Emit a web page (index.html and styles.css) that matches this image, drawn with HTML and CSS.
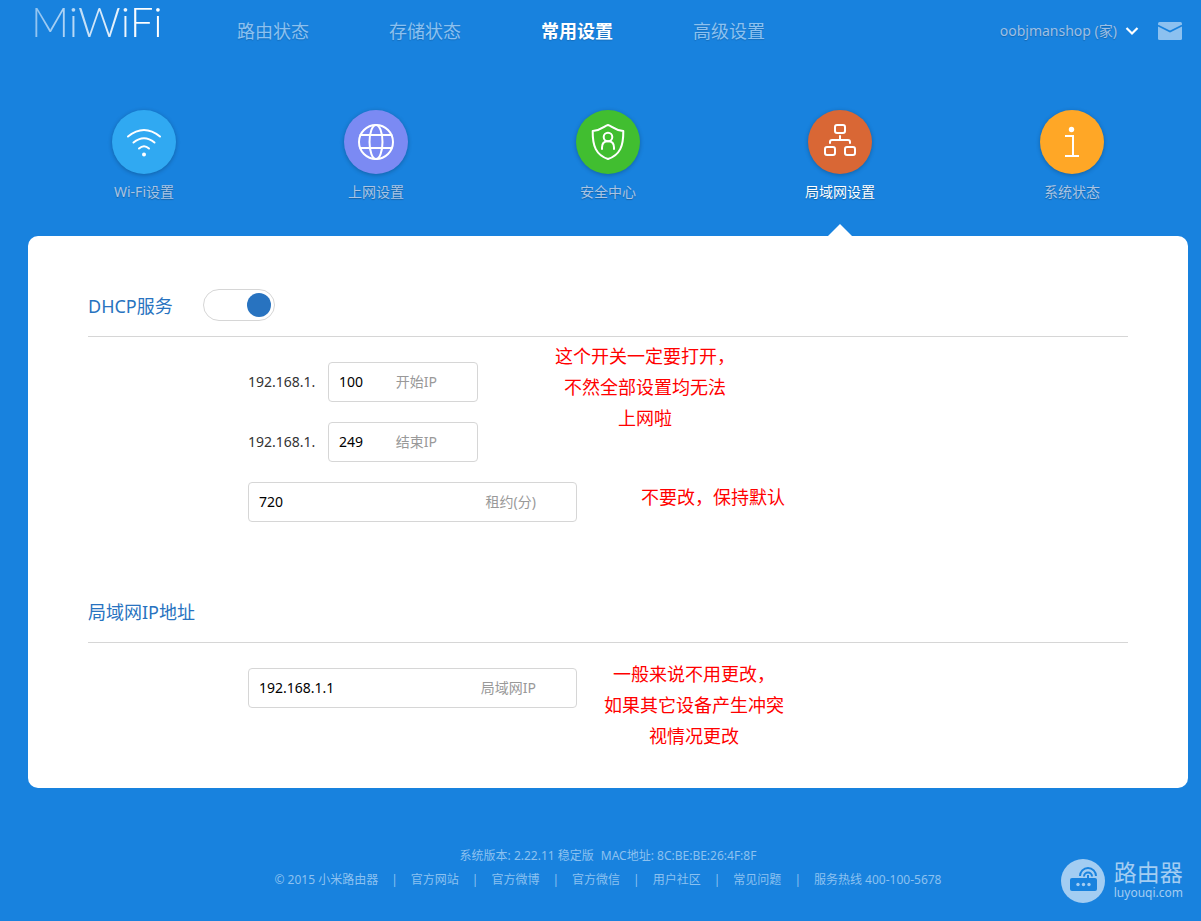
FILE: index.html
```html
<!DOCTYPE html>
<html lang="zh-CN">
<head>
<meta charset="utf-8">
<meta name="viewport" content="width=device-width, initial-scale=1">
<title>MiWiFi 局域网设置</title>
<link rel="stylesheet" href="styles.css">
</head>
<body>
<header class="topbar">
  <a class="brand" href="#">MiWiFi</a>
  <nav class="main-nav">
    <a href="#">路由状态</a>
    <a href="#">存储状态</a>
    <a class="active" href="#">常用设置</a>
    <a href="#">高级设置</a>
  </nav>
  <div class="account">
    <button class="user" type="button">oobjmanshop (家)
      <svg width="14" height="10" viewBox="0 0 14 10" fill="none" stroke="#fff" stroke-width="2.2"><path d="M1.5 2 7 7.500l5.500-5.500"/></svg>
    </button>
    <button class="mail" type="button" aria-label="消息">
      <svg width="24" height="18" viewBox="0 0 24 18"><rect width="24" height="18" rx="1.500" fill="#8cc1f0"/><path d="M0 3.500 12 9.500l12-6" fill="none" stroke="#1882de" stroke-width="1.600"/></svg>
    </button>
  </div>
</header>

<main class="page">
  <nav class="sub-nav">
    <a href="#">
      <span class="disc wifi"><svg viewBox="0 0 64 64"><path d="M16 26.500Q32 13.500 48 26.500M21.500 32.500Q32 24 42.500 32.500M27 38.500Q32 34 37 38.500"/><circle class="dot" cx="32" cy="44.500" r="2"/></svg></span>
      Wi-Fi设置
    </a>
    <a href="#">
      <span class="disc net"><svg viewBox="0 0 64 64"><circle cx="32" cy="32" r="17"/><ellipse cx="32" cy="32" rx="6.500" ry="17"/><path d="M16.500 25h31M16.500 38h31"/></svg></span>
      上网设置
    </a>
    <a href="#">
      <span class="disc safe"><svg viewBox="0 0 64 64"><path d="M32 15c-4 1-5.500 5-15.300 6C16.500 36 20 45 32 49c12-4 15.500-13 15.300-28C37.500 20 36 16 32 15z"/><circle cx="32" cy="27" r="4.300"/><path d="M26 39v-1.500c0-3.500 2-6.200 6-6.200s6 2.700 6 6.200v1.500"/></svg></span>
      安全中心
    </a>
    <a class="active" href="#">
      <span class="disc lan"><svg viewBox="0 0 64 64"><rect x="27" y="15" width="10" height="8" rx="2"/><rect x="17" y="37" width="10" height="8" rx="2"/><rect x="37" y="37" width="10" height="8" rx="2"/><path d="M32 26v4M22 33v-1q0-2 2-2h16q2 0 2 2v1"/></svg></span>
      局域网设置
    </a>
    <a href="#">
      <span class="disc info"><svg viewBox="0 0 64 64"><circle class="dot" cx="31.500" cy="19.500" r="2.700"/><path d="M25 26h8v20M25 46h14"/></svg></span>
      系统状态
    </a>
  </nav>

  <form class="panel">
    <section>
      <div class="section-head">
        <h2 id="dhcp">DHCP服务</h2>
        <input class="switch" type="checkbox" role="switch" aria-labelledby="dhcp" checked>
      </div>
      <div class="section-body dhcp-body">
        <div class="line">
          <div class="fields">
            <div class="ip-row">
              <span class="prefix">192.168.1.</span>
              <div class="field"><input id="start" type="text" value="100"><label for="start">开始IP</label></div>
            </div>
            <div class="ip-row">
              <span class="prefix">192.168.1.</span>
              <div class="field"><input id="end" type="text" value="249"><label for="end">结束IP</label></div>
            </div>
          </div>
          <p class="note note-switch">这个开关一定要打开，<br>不然全部设置均无法<br>上网啦</p>
        </div>
        <div class="line lease">
          <div class="field wide"><input id="lease" type="text" value="720"><label for="lease">租约(分)</label></div>
          <p class="note note-lease">不要改，保持默认</p>
        </div>
      </div>
    </section>
    <section>
      <div class="section-head"><h2>局域网IP地址</h2></div>
      <div class="section-body lan-body">
        <div class="line">
          <div class="field wide lan-field"><input id="lanip" type="text" value="192.168.1.1"><label for="lanip">局域网IP</label></div>
          <p class="note note-lan">一般来说不用更改，<br>如果其它设备产生冲突<br>视情况更改</p>
        </div>
      </div>
    </section>
  </form>
</main>

<footer class="footer">
  <p class="version"><span>系统版本: 2.22.11 稳定版</span><span>MAC地址: 8C:BE:BE:26:4F:8F</span></p>
  <div class="links">
    <span>© 2015 小米路由器</span><span>|</span>
    <a href="#">官方网站</a><span>|</span>
    <a href="#">官方微博</a><span>|</span>
    <a href="#">官方微信</a><span>|</span>
    <a href="#">用户社区</a><span>|</span>
    <a href="#">常见问题</a><span>|</span>
    <span>服务热线 400-100-5678</span>
  </div>
  <div class="watermark">
    <svg width="44" height="44" viewBox="0 0 44 44"><circle cx="22" cy="22" r="22" fill="#a3cdf2"/><rect x="9" y="19" width="27" height="13" rx="2" fill="#1882de"/><g fill="#a3cdf2"><circle cx="17" cy="25.500" r="1.700"/><circle cx="22.500" cy="25.500" r="1.700"/><circle cx="28" cy="25.500" r="1.700"/></g><path d="M19 17a8 8 0 0 1 16 0M23 17.500a4 4 0 0 1 8 0" fill="none" stroke="#1882de" stroke-width="2"/><path d="M27 16v4" stroke="#1882de" stroke-width="2"/></svg>
    <div class="mark-text"><span class="mark-name">路由器</span><span class="mark-url">luyouqi.com</span></div>
  </div>
</footer>
</body>
</html>
```

FILE: styles.css
```css
* { box-sizing: border-box; }

body {
  margin: 0;
  min-height: 100vh;
  background: #1882de;
  color: #333;
  font: 14px/20px "Noto Sans", "Noto Sans CJK SC", sans-serif;
}

a { color: inherit; text-decoration: none; }
h2, p { margin: 0; }
button {
  padding: 0;
  border: 0;
  background: none;
  color: inherit;
  font: inherit;
  cursor: pointer;
}

.topbar {
  display: flex;
  align-items: center;
  height: 62px;
  padding: 0 19px 0 31px;
}

.brand {
  width: 206px;
  padding-bottom: 20px;
  background: linear-gradient(90deg, #8cc1f0, #fff 110px);
  background-clip: text;
  -webkit-background-clip: text;
  color: transparent;
  font: 300 42px/42px Lato, sans-serif;
}

.main-nav {
  display: flex;
  gap: 80px;
  color: #8cc1f0;
  font-size: 18px;
  line-height: 26px;
  white-space: nowrap;
}
.main-nav a { text-shadow: 0 1px 1px rgba(0, 0, 0, .15); }
.main-nav .active { color: #fff; font-weight: 700; }

.account {
  display: flex;
  align-items: center;
  gap: 19px;
  margin-left: auto;
  color: #9fbfe3;
}
.user {
  display: flex;
  align-items: center;
  gap: 8px;
  white-space: nowrap;
  text-shadow: 0 1px 1px rgba(0, 0, 0, .2);
}
.mail { display: flex; }

.page { padding: 48px 13px 0 28px; }

.sub-nav {
  display: grid;
  grid-template-columns: repeat(5, 1fr);
  height: 126px;
  color: #a9c4e4;
}
.sub-nav a {
  position: relative;
  display: flex;
  flex-direction: column;
  align-items: center;
  gap: 8px;
  text-shadow: 0 1px 1px rgba(0, 0, 0, .25);
}
.sub-nav .active { color: #fff; }
.sub-nav .active::after {
  content: "";
  position: absolute;
  bottom: 0;
  border: solid transparent;
  border-width: 0 12px 12px;
  border-bottom-color: #fff;
}

.disc {
  width: 64px;
  height: 64px;
  border-radius: 50%;
  box-shadow: 0 1px 4px rgba(0, 0, 0, .25);
}
.disc svg {
  display: block;
  fill: none;
  stroke: #fff;
  stroke-width: 2;
  stroke-linecap: round;
  stroke-linejoin: round;
}
.disc .dot { fill: #fff; stroke: none; }
.wifi { background: #30a9f2; }
.net { background: #7b8af3; }
.safe { background: #41be30; }
.lan { background: #d96735; }
.info { background: #ffa726; }
.info svg { stroke-linecap: butt; stroke-linejoin: miter; }

.panel {
  padding: 40px 60px 36px;
  border-radius: 10px;
  background: #fff;
}

.section-head {
  display: flex;
  align-items: center;
  gap: 30px;
  height: 61px;
  border-bottom: 1px solid #d6d6d6;
}
.section-head h2 {
  color: #2873c0;
  font-size: 18px;
  font-weight: 400;
  line-height: 26px;
}

.switch {
  appearance: none;
  display: flex;
  justify-content: flex-end;
  align-items: center;
  width: 72px;
  height: 32px;
  margin: 0 0 2px;
  padding: 0 3px;
  border: 1px solid #d6d6d6;
  border-radius: 16px;
  background: #fff;
}
.switch::before {
  content: "";
  width: 24px;
  height: 24px;
  border-radius: 50%;
  background: #2873c0;
}
.switch:not(:checked) { justify-content: flex-start; }

.section-body { padding-left: 160px; }
.dhcp-body { padding-top: 4px; padding-bottom: 60px; }
.lan-body { padding-top: 16px; }

.line { display: flex; align-items: flex-start; }
.fields {
  display: flex;
  flex-direction: column;
  gap: 20px;
  padding-top: 21px;
}
.ip-row { display: flex; align-items: center; }
.prefix { width: 80px; }

.field {
  display: flex;
  align-items: center;
  width: 150px;
  height: 40px;
  padding: 0 40px 0 10px;
  border: 1px solid #d6d6d6;
  border-radius: 4px;
}
.wide { width: 329px; }
.field input {
  flex: 1;
  min-width: 0;
  padding: 0;
  border: 0;
  outline: 0;
  background: none;
  color: #000;
  font: inherit;
}
.field label { color: #999; white-space: nowrap; }

.lease { margin-top: 20px; }
.lan-field { margin-top: 9px; }

.note {
  color: #f00;
  font-size: 18px;
  line-height: 31px;
  text-align: center;
}
.note-switch { margin-left: 77px; }
.note-lease { margin-left: 64px; }
.note-lan { margin-left: 27px; }

.footer {
  position: relative;
  padding: 56px 13px 29px 28px;
  color: #8cc1f0;
  font-size: 12px;
  line-height: 24px;
}
.version, .links {
  display: flex;
  flex-wrap: wrap;
  justify-content: center;
}
.version { gap: 7px; }
.links { gap: 13px; }

.watermark {
  position: absolute;
  right: 18px;
  bottom: 18px;
  display: flex;
  align-items: center;
  gap: 9px;
  color: #a3cdf2;
}
.mark-text { display: flex; flex-direction: column; }
.mark-name { font-size: 23px; line-height: 24px; }
.mark-url { font-size: 12px; line-height: 18px; }
```
